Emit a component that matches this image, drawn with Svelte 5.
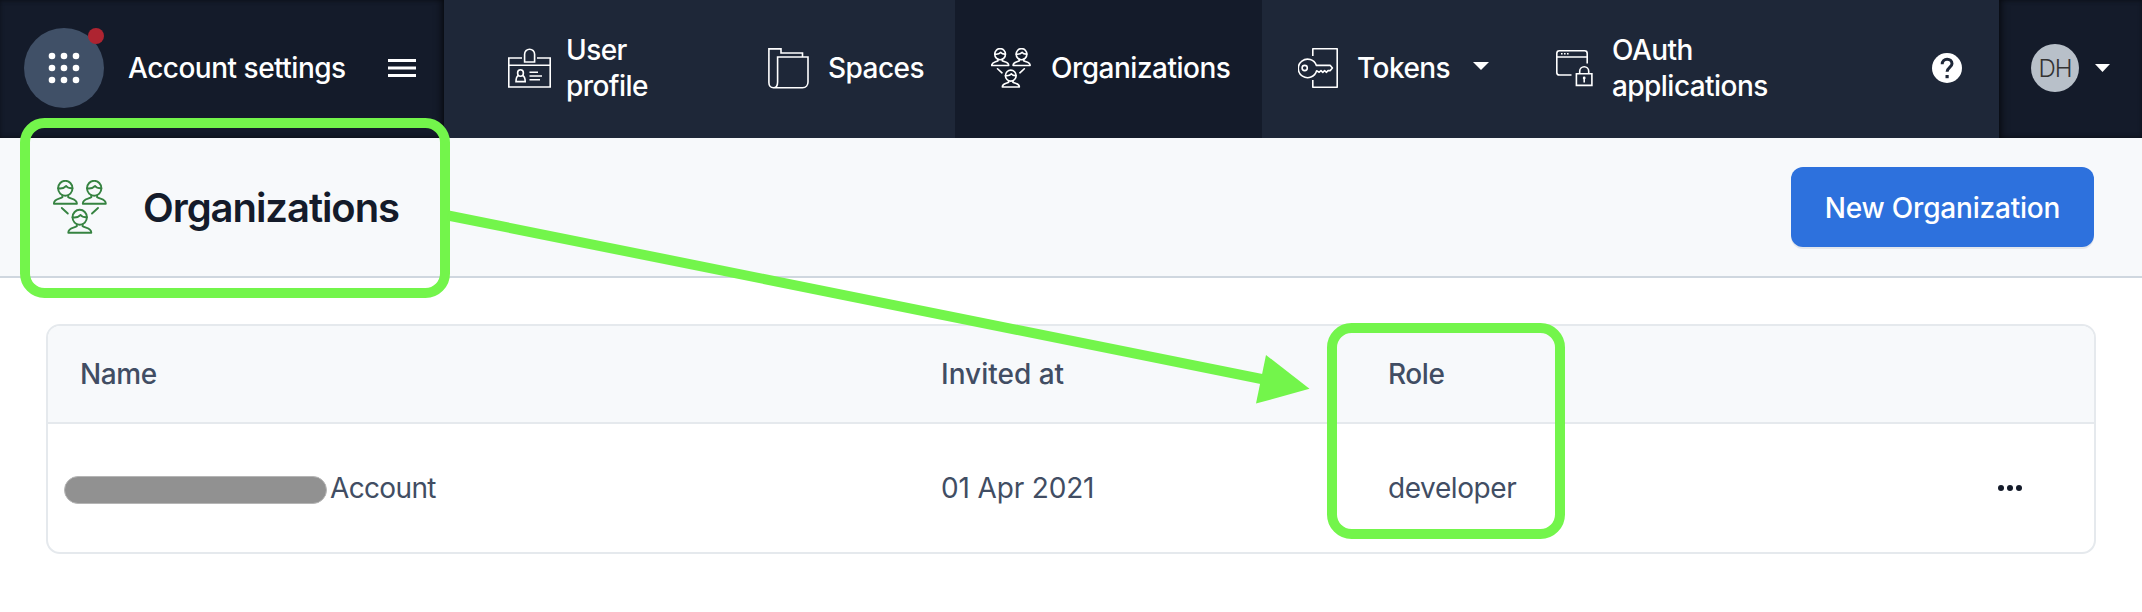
<script>
  const columns = ['Name', 'Invited at', 'Role'];
  const rows = [{ name: 'Account', invited: '01 Apr 2021', role: 'developer' }];
  const gridDots = [0, 12, 24].flatMap((y) => [0, 12, 24].map((x) => ({ x: x + 4, y: y + 4 })));
</script>

{#snippet person(x, y)}
  <g transform="translate({x} {y})">
    <ellipse cx="12.3" cy="8.3" rx="7.2" ry="7.5" />
    <path d="M5.2 8.3 C8.5 8.8 11 8.2 13.2 6 C14.5 7.7 16.5 8.3 19.4 8.2" />
    <path d="M9.4 15.3 V17.3 C6 19.3 .9 18.7 .9 23.7 H23.9 C23.9 18.7 18.6 19.3 15.2 17.3 V15.3" />
  </g>
{/snippet}

{#snippet people(size, stroke)}
  <svg width={size} height={size} viewBox="0 0 54 54" fill="none" stroke="currentColor" stroke-width={stroke} stroke-linecap="round" stroke-linejoin="round">
    {@render person(0, 0)}
    {@render person(28.9, 0)}
    {@render person(14.4, 29)}
    <path d="M8.8 28 L14.8 33.5 M45 28 L39 33.5" />
  </svg>
{/snippet}

<div class="page">
  <header>
    <div class="brand">
      <div class="apps">
        <svg width="32" height="32" viewBox="0 0 32 32" fill="#fff">
          {#each gridDots as d}<circle cx={d.x} cy={d.y} r="3.3" />{/each}
        </svg>
        <span class="alert"></span>
      </div>
      <span class="brand-name">Account settings</span>
      <svg class="menu" width="28" height="18" viewBox="0 0 28 18" fill="#fff">
        <path d="M0 0H28V3H0zM0 7.5H28V10.5H0zM0 15H28V18H0z" />
      </svg>
    </div>
    <nav>
      <a class="item profile">
        <svg width="43" height="40" viewBox="0 0 43 40" fill="none" stroke="#fff" stroke-width="1.6">
          <path d="M14 10H.8V39H42.2V10H29M.8 17.3H42.2M16.6 14V6.2a5 5 0 0 1 10 0V14z" />
          <ellipse cx="12.5" cy="25" rx="2.9" ry="3.3" />
          <path d="M10.3 27.5C8.5 28.5 8 31 8 33.6H17.2C17.2 31 16.5 28.5 14.7 27.5M21.5 24.3H30M21.5 28H34M21.5 31.8H32" />
        </svg>
        <span>User<br />profile</span>
      </a>
      <a class="item spaces">
        <svg width="41" height="41" viewBox="0 0 41 41" fill="none" stroke="#fff" stroke-width="1.6">
          <path d="M5.5 39.8C2.5 39.8.9 37.5.9 34.5V.9H13V5H34.5V8.8M5.5 39.8H34.5C38 39.8 40 37 40 34V9H9.6V34C9.6 37.5 8.5 39.8 5.5 39.8z" />
        </svg>
        <span>Spaces</span>
      </a>
      <a class="item orgs active">
        {@render people(40, 2.2)}
        <span>Organizations</span>
      </a>
      <a class="item tokens">
        <svg width="40" height="40" viewBox="0 0 40 40" fill="none" stroke="#fff" stroke-width="1.6" stroke-linejoin="round">
          <path d="M14.8 8V.8H39.2V39.2H14.8V32" />
          <path d="M18.4 17.4H32.3L34.4 20L32.3 22.6H30L28.5 24.3L26.6 22.7L24.8 24.3L23 22.7L21.2 24.2L18.6 22.8A9.3 9.3 0 1 1 18.4 17.4z" />
          <circle cx="6.7" cy="20" r="2.6" />
        </svg>
        <span>Tokens</span>
        <svg class="caret" width="16" height="8" viewBox="0 0 16 8"><path d="M0 0H16L8 8z" fill="#fff" /></svg>
      </a>
      <a class="item oauth">
        <svg width="37" height="37" viewBox="0 0 37 37" fill="none" stroke="#fff" stroke-width="1.6">
          <path d="M31.2 13.5V3.4Q31.2.8 28.6.8H3.4Q.8.8.8 3.4V22.4Q.8 25 3.4 25H15.5M.8 7H31.2" />
          <path d="M5 3.8H6.6M8 3.8H9.6M11 3.8H12.6" />
          <path d="M20.4 23.8H35.9V35.4H20.4zM23.7 23.8V21.3a4.5 4.5 0 0 1 9 0V23.8" />
          <circle cx="28.2" cy="28" r="1.4" fill="#fff" stroke="none" /><path d="M28.2 28V32.5" />
        </svg>
        <span>OAuth<br />applications</span>
      </a>
      <svg class="help" width="30" height="30" viewBox="0 0 30 30">
        <circle cx="15" cy="15" r="15" fill="#fff" />
        <path d="M10.2 11.2C10.2 8 12.4 6.2 15.1 6.2S20 8 20 10.8C20 14.2 15.1 14.8 15.1 18.8" fill="none" stroke="#1e2738" stroke-width="3" />
        <rect x="13.5" y="22" width="3.2" height="3.2" fill="#1e2738" />
      </svg>
    </nav>
    <div class="user">
      <span class="avatar">DH</span>
      <svg width="15" height="8" viewBox="0 0 15 8"><path d="M0 0H15L7.5 8z" fill="#fff" /></svg>
    </div>
  </header>

  <section class="titlebar">
    <span class="title-icon">{@render people(54, 1.9)}</span>
    <h1>Organizations</h1>
    <button>New Organization</button>
  </section>

  <main>
    <div class="table">
      <div class="row head">
        {#each columns as c}<span>{c}</span>{/each}
      </div>
      {#each rows as r}
        <div class="row">
          <span class="name"><i class="redacted"></i>{r.name}</span>
          <span class="date">{r.invited}</span>
          <span>{r.role}</span>
          <svg class="more" width="24" height="6" viewBox="0 0 24 6" fill="#141b2a"><circle cx="3" cy="3" r="3" /><circle cx="12" cy="3" r="3" /><circle cx="21" cy="3" r="3" /></svg>
        </div>
      {/each}
    </div>
  </main>

  <svg class="marks" width="2142" height="612" viewBox="0 0 2142 612" fill="none" stroke="#73f54b" stroke-width="10">
    <rect x="25" y="123" width="420" height="170" rx="19.5" />
    <rect x="1332" y="328" width="228" height="206" rx="19.5" />
    <path d="M448 215.5L1264 379.5" />
    <path d="M1266 355L1309.5 388.7L1256 403.6z" fill="#73f54b" stroke="none" />
  </svg>
</div>

<style>
  :global(body) { margin: 0; background: #fff; }
  .page {
    position: relative;
    width: 2142px;
    height: 612px;
    overflow: hidden;
    background: #fff;
    font-family: Inter, "Liberation Sans", sans-serif;
    font-size: 28px;
    color: #414d63;
  }
  svg { display: block; flex: none; }
  header { display: flex; height: 138px; background: #1e2738; color: #fff; font-weight: 500; line-height: 36px; }
  .brand, .user { box-sizing: border-box; display: flex; align-items: center; background: #141b2a; }
  .brand {
    width: 444px;
    padding: 0 28px 2px 24px;
    box-shadow: inset -6px 0 8px -4px rgba(0, 0, 0, .55), inset 0 0 4px rgba(0, 0, 0, .4);
  }
  .brand-name { margin-left: 24px; letter-spacing: -.5px; white-space: nowrap; }
  .menu { margin-left: auto; }
  .apps { position: relative; width: 80px; height: 80px; border-radius: 50%; background: #405067; display: grid; place-items: center; flex: none; }
  .alert { position: absolute; right: 0; top: 0; width: 16px; height: 16px; border-radius: 50%; background: #ae2431; }
  nav { flex: 1; display: flex; align-items: stretch; padding-left: 28px; }
  .item { box-sizing: border-box; display: flex; align-items: center; padding: 0 0 2px 36px; letter-spacing: -.55px; white-space: nowrap; }
  .item span { margin-left: 19px; }
  .profile { width: 260px; }
  .item.profile span { margin-left: 15px; }
  .spaces { width: 223px; }
  .active { width: 307px; background: #141b2a; letter-spacing: -.5px; }
  .item.active span { margin-left: 20px; }
  .tokens { width: 258px; }
  .caret { margin-left: 23px; margin-top: -4px; }
  .oauth { width: 412px; }
  .help { align-self: center; margin-top: -2px; }
  .user {
    width: 143px;
    padding: 0 0 2px 32px;
    gap: 16px;
    box-shadow: inset 6px 0 8px -4px rgba(0, 0, 0, .55), inset 0 0 4px rgba(0, 0, 0, .4);
  }
  .avatar { width: 48px; height: 48px; border-radius: 50%; background: #b8c0c9; color: #333; font-weight: 300; font-size: 24px; line-height: 49px; text-align: center; letter-spacing: -1px; }
  .titlebar { box-sizing: border-box; height: 140px; padding: 0 48px 0 53px; display: flex; align-items: center; background: #f7f9fb; border-bottom: 2px solid #cfd7df; }
  .title-icon { color: #368341; }
  h1 { margin: 2px 0 0 36px; font-size: 40px; line-height: 48px; font-weight: 600; letter-spacing: -1.05px; color: #141b2a; }
  button { margin-left: auto; width: 303px; height: 80px; border: 0; border-radius: 12px; background: #2d71dd; color: #fff; font: 500 28px/36px Inter, sans-serif; letter-spacing: -.2px; padding: 2px 0 0; box-shadow: 0 2px 0 #e3e7ec; }
  main { padding: 46px 46px 0; }
  .table { border: 2px solid #e5e9ed; border-radius: 14px; overflow: hidden; }
  .row { display: grid; grid-template-columns: 861px 447px 1fr auto; align-items: center; height: 128px; padding: 0 72px 0 32px; letter-spacing: -.4px; }
  .head { height: 96px; background: #f7f9fb; border-bottom: 2px solid #e5e9ed; font-weight: 500; }
  .head span:nth-child(2) { letter-spacing: 0; }
  .date { letter-spacing: -.15px; }
  .name { display: flex; align-items: center; gap: 3px; margin-left: -16px; letter-spacing: -.65px; }
  .redacted { width: 261px; height: 26px; border: 1px solid #b5b5b5; border-radius: 14px; background: #919191; margin-top: 3px; }
  .marks { position: absolute; left: 0; top: 0; pointer-events: none; }
</style>
